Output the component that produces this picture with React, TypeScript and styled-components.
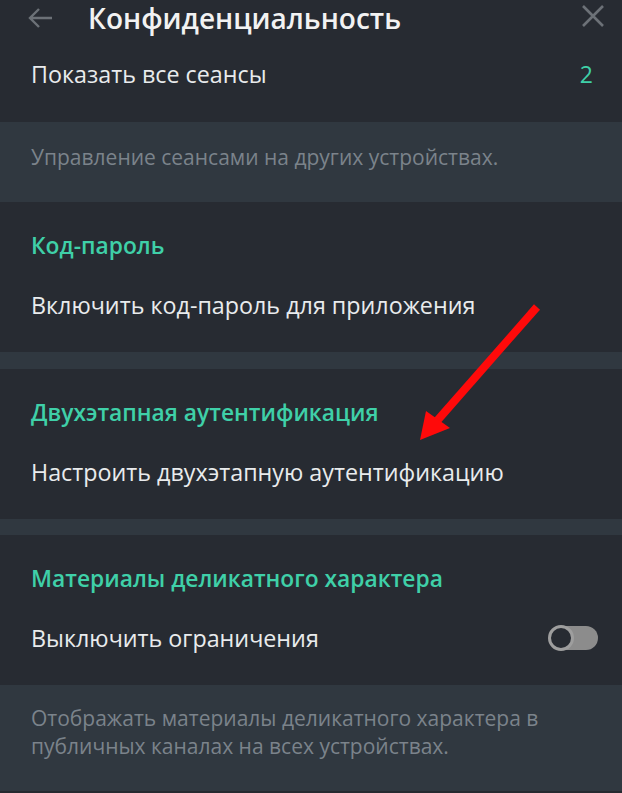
import React from "react";
import styled, { createGlobalStyle } from "styled-components";

const Global = createGlobalStyle`
  html, body { margin: 0; padding: 0; background: #303840; }
  body { font-family: "Open Sans", "Noto Sans", sans-serif; -webkit-font-smoothing: antialiased; }
  * { box-sizing: border-box; }
`;

const Page = styled.div`
  position: relative;
  width: 622px;
  height: 793px;
  overflow: hidden;
  background: #303840;
  display: flex;
  flex-direction: column;
`;

const TopPanel = styled.div`
  background: #272b32;
  display: flex;
  flex-direction: column;
  gap: 8px;
  padding-bottom: 18px;
`;

const Header = styled.div`
  height: 36px;
  display: flex;
  align-items: center;
  padding: 0 17px 0 27px;
`;

const Title = styled.div`
  flex: 1;
  margin-left: 35px;
  color: #f2f2f2;
  font-size: 28px;
  font-weight: 600;
  line-height: 36px;
  white-space: nowrap;
`;

const Panel = styled.div`
  background: #272b32;
  padding: 30px 0 17px;
  display: flex;
  flex-direction: column;
`;

const SectionTitle = styled.div`
  height: 28px;
  margin-bottom: 15px;
  padding: 0 31px;
  color: #3fd0a8;
  font-size: 22.8px;
  font-weight: 600;
  line-height: 28px;
  white-space: nowrap;
`;

const Row = styled.div`
  height: 60px;
  padding: 0 24px 0 31px;
  display: flex;
  align-items: center;
  justify-content: space-between;
  color: #e9ebed;
  font-size: 23.3px;
  white-space: nowrap;
`;

const Value = styled.span`
  color: #3fd0a8;
  font-size: 23px;
  margin-right: 5px;
`;

const Hint = styled.div<{ $top: number; $bottom: number }>`
  padding: ${(p) => p.$top}px 31px ${(p) => p.$bottom}px;
  color: #7b838b;
  font-size: 21px;
  line-height: 28px;
  white-space: nowrap;
`;

const Gap = styled.div<{ $h: number }>`
  height: ${(p) => p.$h}px;
`;

const BottomEdge = styled.div`
  flex: 1;
  background: #262a30;
`;

const Toggle = styled.div`
  position: relative;
  width: 50px;
  height: 26px;
`;

const Track = styled.div`
  position: absolute;
  left: 6px;
  right: 0;
  top: 1px;
  bottom: 1px;
  border-radius: 12px;
  background: #8c8c8c;
`;

const Knob = styled.div`
  position: absolute;
  left: 0;
  top: 0;
  width: 26px;
  height: 26px;
  border-radius: 50%;
  background: #272b32;
  border: 3px solid #9e9e9e;
`;

const Overlay = styled.svg`
  position: absolute;
  left: 0;
  top: 0;
  pointer-events: none;
`;

export default function App() {
  return (
    <Page>
      <Global />
      <TopPanel>
        <Header>
          <svg width="26" height="22" viewBox="0 0 26 22">
            <path d="M25 11H3M12 2L3 11l9 9" fill="none" stroke="#6c7177" strokeWidth="2.4" />
          </svg>
          <Title>Конфиденциальность</Title>
          <svg width="24" height="24" viewBox="0 0 24 24" style={{ marginTop: -4 }}>
            <path d="M2 2L22 22M22 2L2 22" fill="none" stroke="#6c7177" strokeWidth="2.6" />
          </svg>
        </Header>
        <Row>
          <span>Показать все сеансы</span>
          <Value>2</Value>
        </Row>
      </TopPanel>
      <Hint $top={21} $bottom={31}>Управление сеансами на других устройствах.</Hint>
      <Panel>
        <SectionTitle>Код-пароль</SectionTitle>
        <Row>Включить код-пароль для приложения</Row>
      </Panel>
      <Gap $h={17} />
      <Panel>
        <SectionTitle>Двухэтапная аутентификация</SectionTitle>
        <Row>Настроить двухэтапную аутентификацию</Row>
      </Panel>
      <Gap $h={16} />
      <Panel>
        <SectionTitle>Материалы деликатного характера</SectionTitle>
        <Row>
          <span>Выключить ограничения</span>
          <Toggle>
            <Track />
            <Knob />
          </Toggle>
        </Row>
      </Panel>
      <Hint $top={19} $bottom={31}>
        Отображать материалы деликатного характера в
        <br />
        публичных каналах на всех устройствах.
      </Hint>
      <BottomEdge />
      <Overlay width="622" height="793" viewBox="0 0 622 793">
        <line x1="537" y1="307" x2="436" y2="422" stroke="#ff0a0a" strokeWidth="8" strokeLinecap="butt" />
        <polygon points="420,440 426,411 450,428" fill="#ff0a0a" />
      </Overlay>
    </Page>
  );
}
